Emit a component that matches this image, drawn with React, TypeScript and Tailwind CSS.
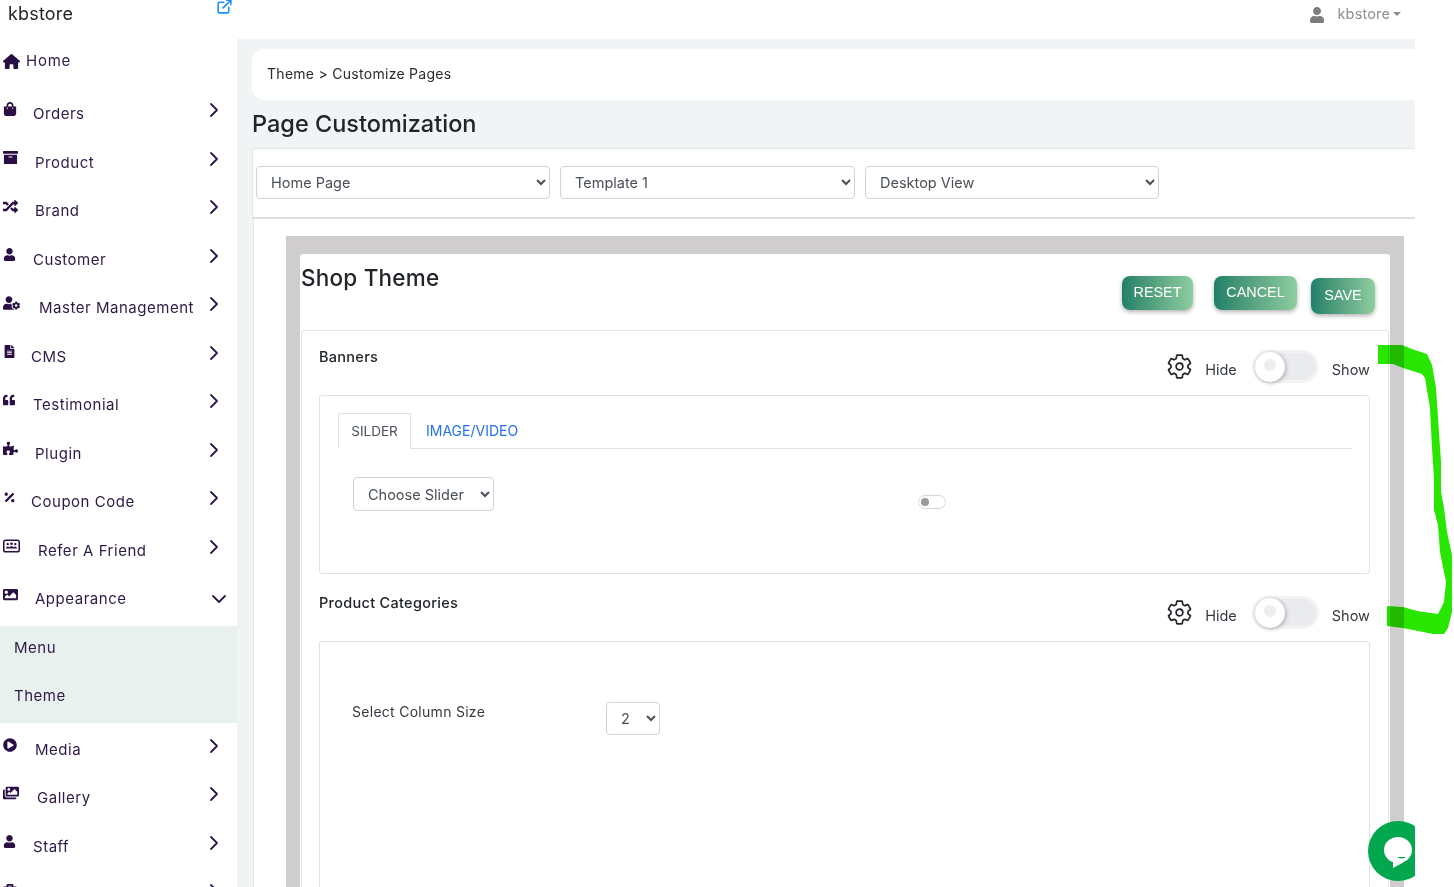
import React from "react";
import { ChevronRight, ChevronDown, ExternalLink } from "lucide-react";
import { FaShoppingBag, FaArchive, FaRandom, FaUser, FaUserCog, FaFileAlt, FaQuoteLeft, FaPuzzlePiece, FaPercentage, FaImage, FaPlayCircle, FaImages, FaBriefcase } from "react-icons/fa";
import { FaHouse } from "react-icons/fa6";
import { IoSettingsOutline } from "react-icons/io5";

const font = "font-['Inter','Liberation_Sans',sans-serif]";

type Item = { label: string; icon: React.ReactNode; ml: string };

function ReferIcon() {
  return (
    <svg width="18" height="14" viewBox="0 0 18 14" fill="currentColor">
      <rect x="0.8" y="0.8" width="16.4" height="12.4" rx="2" fill="none" stroke="currentColor" strokeWidth="1.6" />
      <circle cx="5" cy="5" r="1.3" />
      <circle cx="9" cy="4.6" r="1.4" />
      <circle cx="13" cy="5" r="1.3" />
      <path d="M3.2 9.6c0-1.3 1-2.1 1.8-2.1s1.3.4 1.5.8c.6-.7 1.4-1 2.5-1s1.900.3 2.500 1c.2-.4.700-.8 1.500-.8s1.800.8 1.800 2.100z" />
    </svg>
  );
}

const top: Item[] = [
  { label: "Orders", icon: <FaShoppingBag size={14} />, ml: "ml-[13px]" },
  { label: "Product", icon: <FaArchive size={15} />, ml: "ml-[15px]" },
  { label: "Brand", icon: <FaRandom size={15} />, ml: "ml-[15px]" },
  { label: "Customer", icon: <FaUser size={13} />, ml: "ml-[13px]" },
  { label: "Master Management", icon: <FaUserCog size={18} />, ml: "ml-[19px]" },
  { label: "CMS", icon: <FaFileAlt size={13} />, ml: "ml-[11px]" },
  { label: "Testimonial", icon: <FaQuoteLeft size={12} />, ml: "ml-[13px]" },
  { label: "Plugin", icon: <FaPuzzlePiece size={15} />, ml: "ml-[15px]" },
  { label: "Coupon Code", icon: <FaPercentage size={13} />, ml: "ml-[11px]" },
  { label: "Refer A Friend", icon: <ReferIcon />, ml: "ml-[18px]" },
];
const bottom: Item[] = [
  { label: "Media", icon: <FaPlayCircle size={14} />, ml: "ml-[15px]" },
  { label: "Gallery", icon: <FaImages size={16} />, ml: "ml-[17px]" },
  { label: "Staff", icon: <FaUser size={13} />, ml: "ml-[13px]" },
  { label: "", icon: <FaBriefcase size={14} />, ml: "ml-[13px]" },
];

function Row({ item, open }: { item: Item; open?: boolean }) {
  return (
    <div className="flex items-center h-[48.5px] pl-[3px] text-[#2e1a47]">
      <span className="w-[17px] -translate-y-[4px] text-[#2a0f45] flex">{item.icon}</span>
      <span className={`${item.ml} pt-[2px] text-[15px] tracking-[0.035em] whitespace-nowrap`}>{item.label}</span>
      {open ? (
        <ChevronDown size={24} strokeWidth={1.8} className="ml-auto mr-[6px] translate-y-[1px]" />
      ) : (
        <ChevronRight size={24} strokeWidth={1.8} className="ml-auto mr-[11px] -translate-y-[3px]" />
      )}
    </div>
  );
}

function Sidebar() {
  return (
    <aside className="w-[237px] shrink-0 bg-white relative">
      <div className="h-[39px] flex items-start justify-between pl-[8px] pr-[4px]">
        <span className="text-[18px] tracking-[0.01em] leading-[28px] text-[#212529]">kbstore</span>
        <ExternalLink size={17} strokeWidth={2.2} className="text-[#1a8cff] -mt-[2px]" />
      </div>
      <div className="flex items-center h-[44px] pl-[3px] text-[#2e1a47]">
        <FaHouse size={17} className="text-[#2a0f45]" />
        <span className="ml-[6px] text-[15px] tracking-[0.05em]">Home</span>
      </div>
      <div className="mt-[6px]">
        {top.map((i) => <Row key={i.label} item={i} />)}
        <Row item={{ label: "Appearance", icon: <FaImage size={15} />, ml: "ml-[15px]" }} open />
      </div>
      <div className="mt-[3.5px] h-[97px] bg-[#e8f1ee] text-[#2e1a47] text-[15px] tracking-[0.035em]">
        <div className="h-[44px] flex items-center pl-[14px]">Menu</div>
        <div className="h-[52px] flex items-center pl-[14px]">Theme</div>
      </div>
      <div className="mt-[1.5px]">
        {bottom.map((i) => <Row key={i.label} item={i} />)}
      </div>
    </aside>
  );
}

function Sel({ value, className }: { value: string; className: string }) {
  return (
    <select
      defaultValue={value}
      className={`${className} h-[33px] bg-white border border-[#ced4da] rounded-[4px] text-[14.5px] text-[#495057] outline-none`}
    >
      <option>{value}</option>
    </select>
  );
}

function Toggle() {
  return (
    <div className="w-[67px] h-[33px] rounded-full border-[3px] border-[#f3f3f3] bg-[#e9ebee] flex items-center">
      <div className="w-[30px] h-[30px] rounded-full bg-white shadow-[1px_1px_4px_rgba(0,0,0,0.3)] flex items-center justify-center">
        <div className="w-[12px] h-[12px] rounded-full bg-[#eeeeee] -translate-y-[2px]" />
      </div>
    </div>
  );
}

function SectionHead({ title, className, titleClass }: { title: string; className: string; titleClass: string }) {
  return (
    <div className={`flex items-start justify-between ${className}`}>
      <span className={`text-[14.5px] font-medium tracking-[0.02em] text-[#212529] leading-[20px] ${titleClass}`}>{title}</span>
      <div className="flex items-center text-[#343a40]">
        <IoSettingsOutline size={27} className="text-[#212529]" />
        <span className="ml-[12px] text-[14.5px] translate-y-[3px]">Hide</span>
        <div className="ml-[15px]"><Toggle /></div>
        <span className="ml-[13px] text-[14.5px] translate-y-[3px]">Show</span>
      </div>
    </div>
  );
}

function GBtn({ label, className }: { label: string; className: string }) {
  return (
    <button className={`${className} rounded-[8px] bg-gradient-to-r from-[#1f8068] to-[#8ecd9f] text-white text-[14.4px] font-['Liberation_Sans',sans-serif] shadow-[0_2px_4px_rgba(0,0,0,0.3)] flex items-center justify-center`}>
      {label}
    </button>
  );
}

function Main() {
  return (
    <main className="flex-1 min-w-0 flex flex-col">
      <div className="h-[39px] bg-white flex items-center justify-end pr-[14px] text-[14.5px] text-[#8a8f94] shrink-0">
        <FaUser size={16} className="text-[#7c7c7c] mr-[13px] -translate-y-[5px]" />
        <span className="-translate-y-[6px] tracking-[0.01em]">kbstore</span>
        <span className="ml-[3px] -translate-y-[6px] w-0 h-0 border-x-[4px] border-x-transparent border-t-[4px] border-t-[#8a8f94]" />
      </div>
      <div className="flex-1 bg-[#f1f4f5] pl-[15px] pt-[10px] min-h-0">
        <div className="h-[51px] pb-[2px] bg-white rounded-l-[12px] flex items-center pl-[15px] text-[14px] tracking-[0.02em] text-[#2b2b2b] shrink-0">
          Theme &gt; Customize Pages
        </div>
        <h1 className="h-[48px] pt-[8px] text-[23.5px] leading-[32px] font-medium text-[#212529]">Page Customization</h1>
        <div className="h-[71px] bg-white border border-r-0 border-[#e2e4e6] border-b-[2px] border-b-[#dedede] rounded-tl-[3px] pl-[3px] pt-[17px] flex gap-[10px]">
          <Sel value="Home Page" className="w-[294px] pl-[10px]" />
          <Sel value="Template 1" className="w-[295px] pl-[10px]" />
          <Sel value="Desktop View" className="w-[294px] pl-[10px]" />
        </div>
        <div className="bg-white border-l border-[#e2e4e6] ml-[1px] pl-[32px] pr-[11px] pt-[17px] h-[700px]">
          <div className="bg-[#cfcdcd] h-[700px] px-[14px] pt-[18px]">
            <div className="bg-white h-[700px] rounded-t-[3px]">
              <div className="h-[76px] flex items-start">
                <h2 className="text-[22.5px] leading-[30px] mt-[9px] ml-[1px] font-medium text-[#212529] tracking-[0.01em]">Shop Theme</h2>
                <div className="ml-auto flex items-start mr-[15px] mt-[22px]">
                  <GBtn label="RESET" className="w-[71px] h-[34px]" />
                  <GBtn label="CANCEL" className="w-[83px] h-[34px] ml-[21px]" />
                  <GBtn label="SAVE" className="w-[64px] h-[36px] ml-[14px] mt-[2px]" />
                </div>
              </div>
              <div className="border border-[#e2e2e2] rounded-[3px] ml-[1px] mr-[1px] pl-[17px] pr-[18px] h-[620px]">
                <SectionHead title="Banners" titleClass="-mt-[3px]" className="pt-[19px] h-[64px]" />
                <div className="border border-[#dfe1e3] rounded-[3px] h-[179px] pt-[17px] pl-[18px] pr-[17px]">
                  <div className="flex border-b border-[#dee2e6] h-[36px]">
                    <div className="w-[73px] h-[36px] border border-[#dee2e6] border-b-white rounded-t-[3px] bg-white flex items-center justify-center text-[13.5px] text-[#495057]">SILDER</div>
                    <div className="ml-[15px] h-[35px] flex items-center text-[14px] text-[#2470f0]">IMAGE/VIDEO</div>
                  </div>
                  <div className="flex items-start mt-[28px] pl-[15px]">
                    <Sel value="Choose Slider" className="w-[141px] !h-[34px] pl-[10px]" />
                    <div className="ml-[424px] mt-[18px] w-[28px] h-[14px] rounded-full border border-[#d8d8d8] bg-white flex items-center pl-[2px]">
                      <div className="w-[8px] h-[8px] rounded-full bg-[#9a9a9a]" />
                    </div>
                  </div>
                </div>
                <SectionHead title="Product Categories" titleClass="-mt-[3px]" className="pt-[22px] h-[67px]" />
                <div className="border border-[#dfe1e3] rounded-[3px] h-[300px] pl-[32px] pt-[60px] flex items-start">
                  <span className="text-[14px] tracking-[0.02em] text-[#343a40] leading-[20px]">Select Column Size</span>
                  <Sel value="2" className="w-[54px] pl-[10px] ml-[121px]" />
                </div>
              </div>
            </div>
          </div>
        </div>
      </div>
    </main>
  );
}

export default function App() {
  return (
    <div className={`w-[1454px] h-[887px] overflow-hidden bg-white relative ${font}`}>
      <div className="w-[1415px] h-[887px] overflow-hidden flex relative">
        <Sidebar />
        <Main />
        <div className="absolute left-[1368px] top-[821px] w-[60px] h-[60px] rounded-full bg-[#03a84e]">
          <svg viewBox="0 0 60 60" width="60" height="60">
            <ellipse cx="30" cy="29" rx="14" ry="13" fill="#fff" />
            <path d="M25 38 L25 47 L36 41 Z" fill="#fff" />
            <path d="M29 36 Q34 39 38 36 Z" fill="#03a84e" />
          </svg>
        </div>
      </div>
      <svg className="absolute left-0 top-0 mix-blend-multiply pointer-events-none" width="1454" height="887">
        <polygon
          fill="#28e600"
          points="1378,345 1402,345 1412,349 1427,354 1432,365 1436,388 1438,418 1441,462 1441,492 1444,508 1447,532 1452,555 1452,612 1448,628 1444,634 1433,634 1413,630 1403,628 1387,626 1387,606 1403,607 1417,611 1438,614 1444,602 1446,582 1440,552 1438,525 1434,510 1434,478 1432,448 1430,408 1425,378 1422,374 1403,368 1393,364 1378,364"
        />
      </svg>
    </div>
  );
}
